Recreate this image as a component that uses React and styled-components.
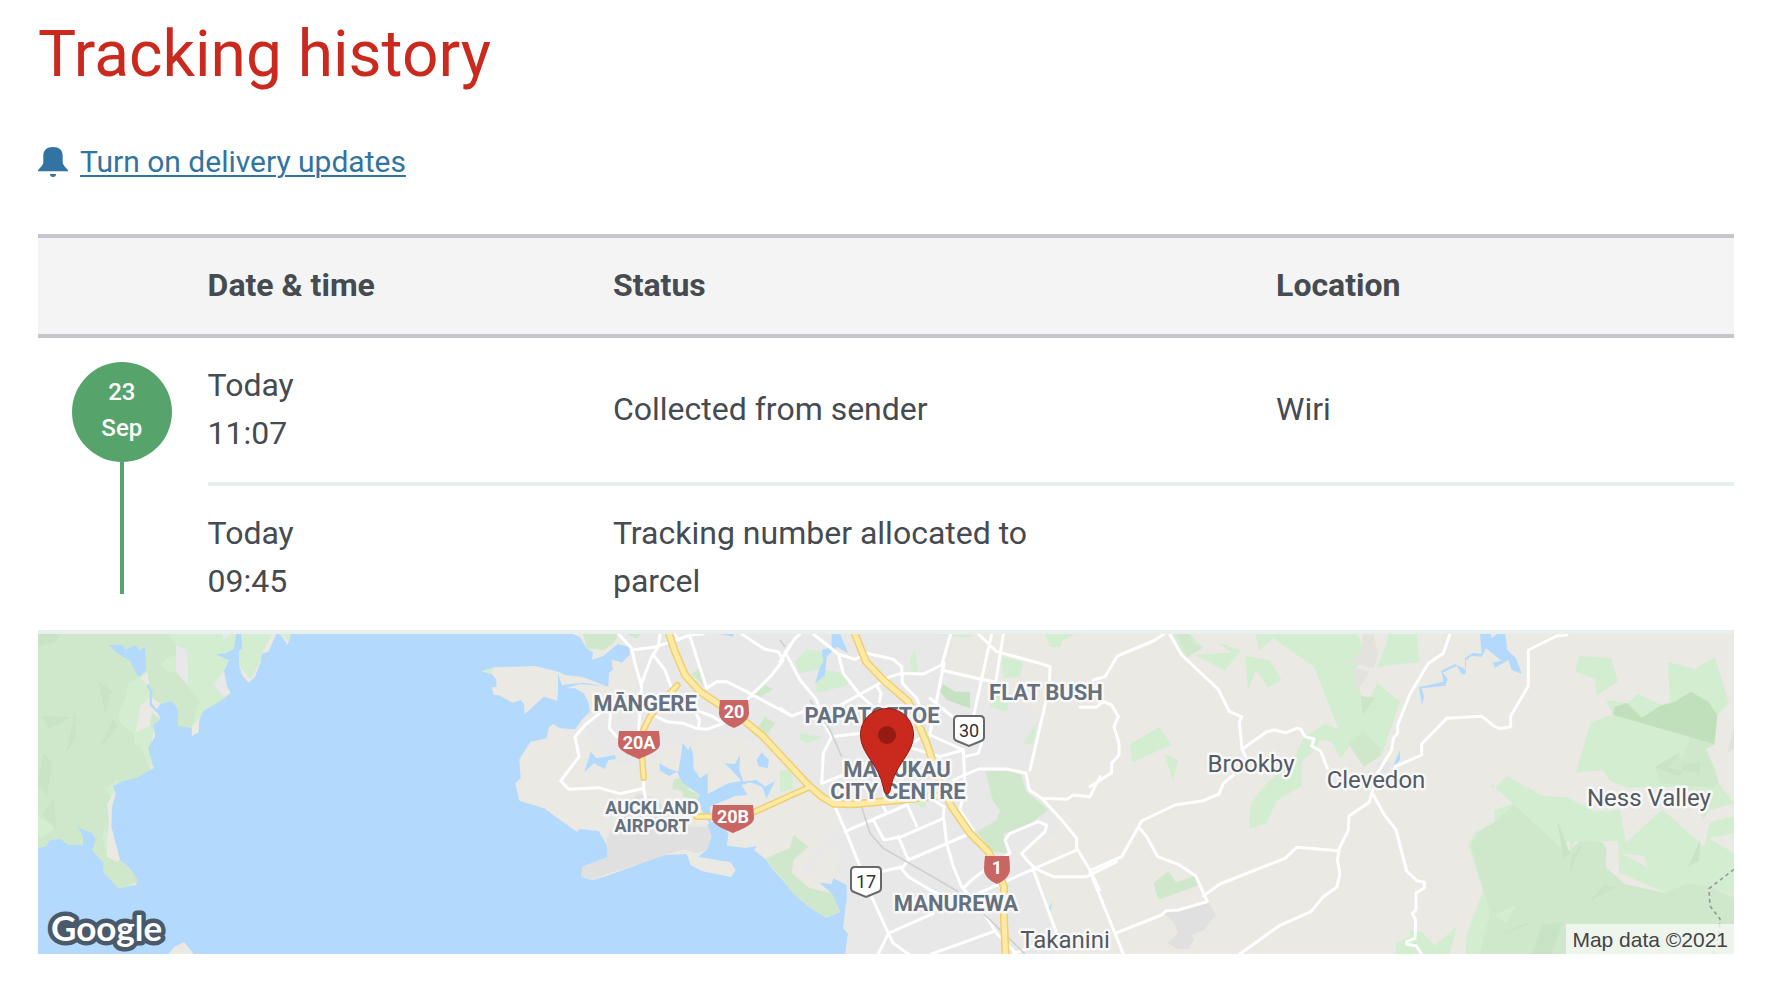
import React from "react";
import styled, { createGlobalStyle } from "styled-components";

const GlobalStyle = createGlobalStyle`
  *, *::before, *::after { box-sizing: border-box; }
  body {
    margin: 0;
    background: #fff;
    color: #454b50;
    font-family: Roboto, "Liberation Sans", sans-serif;
    font-size: 32px;
    line-height: 48px;
  }
`;

const Page = styled.main`
  padding: 15px 58px 54px 38px;
`;

const Title = styled.h1`
  margin: 0;
  color: #ca2a1e;
  font-size: 64px;
  font-weight: 400;
  line-height: 80px;
`;

const UpdatesLink = styled.a`
  display: flex;
  align-items: center;
  gap: 12px;
  width: max-content;
  margin: 43px 0 48px;
  color: #3274a1;
  font-size: 30px;
  text-decoration: none;
  span {
    text-decoration: underline;
    text-decoration-thickness: 2px;
    text-underline-offset: 3px;
  }
`;

const History = styled.table`
  width: 100%;
  table-layout: fixed;
  border-collapse: separate;
  border-spacing: 0;
`;

const Col = styled.col`
  width: ${(p) => p.$width};
`;

const HeadCell = styled.th`
  height: 104px;
  padding: 0 0 2px;
  border: solid #c5c6cb;
  border-width: 4px 0;
  background: #f4f4f5;
  text-align: left;
  font-weight: 700;
`;

const Cell = styled.td`
  padding: 23px ${(p) => p.$endSpace || "0"} 25px 0;
  border-bottom: 4px solid #e8efed;
  vertical-align: middle;
`;

const TimelineCell = styled(Cell)`
  padding: 24px 2px 24px 0;
  vertical-align: top;
`;

const Timeline = styled.div`
  display: flex;
  flex-direction: column;
  align-items: center;
  &::after {
    content: "";
    width: 4px;
    height: 132px;
    background: #56a36c;
  }
`;

const DateBadge = styled.time`
  display: flex;
  flex-direction: column;
  align-items: center;
  justify-content: center;
  width: 100px;
  height: 100px;
  padding-bottom: 4px;
  border-radius: 50%;
  background: #56a36c;
  color: #fff;
  font-size: 24px;
  font-weight: 500;
  line-height: 36px;
`;

const Line = styled.span`
  display: block;
`;

const MapFrame = styled.section`
  position: relative;
  height: 320px;
  overflow: hidden;
  background: #b3d9fd;
`;

const MapDrawing = styled.svg`
  display: block;
  width: 100%;
  height: 100%;
`;

const Attribution = styled.div`
  position: absolute;
  right: 0;
  bottom: 0;
  padding: 1px 6px 0;
  background: rgba(245, 248, 245, 0.8);
  color: #444;
  font-family: "Liberation Sans", Arial, sans-serif;
  font-size: 21px;
  line-height: 29px;
`;

const MapLabel = styled.text`
  fill: ${(p) => (p.$town ? "#555a62" : "#66717f")};
  stroke: #f8f8f8;
  stroke-width: 5px;
  stroke-linejoin: round;
  paint-order: stroke;
  text-anchor: middle;
  font-size: ${(p) => p.$size || 22}px;
  font-weight: ${(p) => (p.$town ? 400 : 700)};
`;

const ShieldText = styled.text`
  fill: ${(p) => (p.$dark ? "#333" : "#fff")};
  text-anchor: middle;
  font-size: 18px;
  font-weight: ${(p) => (p.$dark ? 400 : 700)};
`;

const LogoText = styled.text`
  fill: #fff;
  stroke: #4a5a6b;
  stroke-width: 9px;
  stroke-linejoin: round;
  paint-order: stroke;
  font-family: Lato, sans-serif;
  font-size: 35px;
  font-weight: 700;
`;

const Roads = styled.g`
  fill: none;
  stroke: #fff;
  stroke-width: ${(p) => p.$width || 9};
  stroke-linejoin: round;
  stroke-linecap: round;
`;

const events = [
  { day: "Today", time: "11:07", status: "Collected from sender", place: "Wiri" },
  { day: "Today", time: "09:45", status: "Tracking number allocated to parcel", place: "" },
];

function BellIcon() {
  return (
    <svg width="30" height="30" viewBox="0 0 30 30" aria-hidden="true">
      <path
        fill="#3274a1"
        d="M15 0C9 0 5.300 3 5.300 9V16C4.500 18.500 2.500 20.500 0 23.200V24.300H30V23.200C27.500 20.500 25.500 18.500 24.700 16V9C24.700 3 21 0 15 0ZM12 27H18C18 29 17 30 15 30S12 29 12 27Z"
      />
    </svg>
  );
}

function WestCoast() {
  return (
    <g transform="translate(-24 -42)">
      <path fill="#ebe9e4" d="M634 42H739L715 95L690 103L693 125L674 172L655 188L636 165L628 138V93L638 85ZM750 42H783L773 75ZM415 1002L434 980L462 966L491 1002Z" />
      <path fill="#d3edd0" d="M634 42H726L698 98L690 125L662 178L628 138V93L638 85ZM752 42H783L775 64Z" />
      <path fill="#cfe8cb" d="M24 42H618L612 85L588 100L555 102L597 121L582 152L590 195L583 200L587 215L602 220L582 238L520 273L505 310L506 336L486 348L484 324L444 318V268L426 244L392 251L378 272L392 296L370 316L375 350L354 384L372 443L320 473L262 488L249 498L257 522L246 560L244 620L270 720L296 740L324 780L318 794L266 806L219 755L221 730L186 690L198 660L186 640L148 624L141 595L146 625L159 650V675H115L92 657L61 660L47 680L24 684Z" />
      <path fill="#d3edd0" d="M410 42H618L612 85L588 100L555 102L597 121L582 152L552 195L580 235L520 273L484 324L507 243L445 160L410 152L392 136L410 115L438 105V78ZM328 170L295 190L285 240L265 280L272 310L312 342L314 375H330L360 450L366 430L354 384L370 350L358 300L366 270L355 190ZM24 585L75 624L45 648L24 650ZM262 478L225 508L245 535L256 520L249 498L270 488ZM231 600L216 655L231 700Z" />
      <path fill="#e8e8e8" d="M438 78L472 88L474 197L438 156ZM582 152L590 195L602 220L580 233L552 195ZM577 42H604L580 60Z" />
      <path fill="#ebe9e4" d="M328 172L352 157L357 190L350 194ZM331 258L362 232L392 251L378 272L392 296L366 278L360 318L316 337ZM486 322L508 290L506 336L486 348ZM371 320L375 350L366 364ZM360 430L372 443L362 450ZM252 512L257 522L246 560L244 620L270 720L262 726L231 710V655L237 600L231 555ZM290 798L318 788V795Z" />
      <path fill="#c8e3c5" d="M24 42H91L80 65L24 80ZM205 184L245 212L226 285ZM34 288L123 291L57 328ZM136 276L138 356L108 395ZM250 297L263 320L210 385ZM40 399L66 430L51 525L24 494ZM71 534L80 626L36 584Z" />
      <path fill="#b3d9fd" d="M237 75H278L285 89L318 75L328 92L345 80L348 150L328 170L315 152L300 122L262 100Z" />
      <path fill="none" stroke="#b3d9fd" strokeWidth="7" d="M352 195L364 215L362 252L382 275" />
    </g>
  );
}

function MainLand() {
  return (
    <g transform="translate(1296 -42)">
      <path fill="#ebe9e4" d="M308 42L330 52L350 85L369 97L366 119L400 108L443 72L478 80L479 105L455 128L425 118L428 148L417 160L415 200L335 170L285 165L265 155L195 138L75 142L36 154L66 163L78 178L80 200L65 203L72 225H85L128 248L152 240L162 252L164 283L200 250L222 230L262 242L264 205H315L340 218L355 245L360 275L335 300L315 328L270 325L250 312L237 322L229 355L182 365L148 418L152 475L136 490L148 542L222 565L320 635L330 627L386 633L405 665L418 690L412 712L338 740L333 770L367 780L410 768L580 706L650 702L662 735L695 753L783 771L797 750L782 727L685 710L710 690L725 650L712 615L740 600L775 640L771 677L826 684L862 678L852 690L885 716L910 750L930 772L980 830L1025 866L1070 893L1110 875L1085 820L1130 832L1120 925L1134 940L1126 1002H3792V42Z" />
      <path fill="#e8e8e8" d="M445 42L485 90L500 170L490 215L395 275L340 310L370 380L445 432L520 440L560 415L590 378L650 372L700 345L800 345L860 370L930 410L960 520H1060L1120 600L1000 740L1030 780L1130 832L1120 925L1134 940L1126 1002H1760L1745 930L1690 750L1635 690L1765 640L1755 590L1680 510L1670 450L1710 300L1630 220L1500 170L1440 90L1430 42Z" />
      <path fill="#ebe9e4" d="M1080 670L1110 690L1090 780L1050 790L1010 770ZM1440 90L1500 85L1520 180L1440 180ZM1600 42H1700L1690 90L1610 70Z" />
      <path fill="#e0e0e0" d="M410 655L500 522L545 530L660 620H712L725 650L710 690L680 700L640 688L367 776L333 770L338 740L412 712Z" />
      <path fill="#cfe8cb" d="M340 42H447L430 70L400 90L350 85ZM470 42H513L500 55ZM688 145L710 208L664 162ZM885 290L915 310L890 345L862 325ZM885 195L910 208L865 235L850 225ZM610 480L640 468L662 505L650 508L685 522L688 542L640 530L635 512L606 508ZM885 716L960 684L970 645L1015 680L970 720L965 760L1020 805L1085 820L1110 875L1070 893L1025 866L980 830Z" />
      <path fill="#d3edd0" d="M36 154L70 146L66 163ZM930 455L965 445L970 505L930 520ZM1010 88L1060 95L1065 145L990 160L975 125ZM1065 150L1130 160L1135 195L1040 220L1038 190ZM1335 90L1345 155H1325L1320 120ZM990 340L1055 350L1015 370L990 360ZM1380 45H1510L1500 52ZM1595 110L1660 125L1650 170L1600 175ZM1570 220L1620 235L1610 275L1560 260ZM1700 305L1690 375L1660 370ZM1725 42H1815L1780 60L1770 82L1740 80ZM1320 545L1368 550L1365 565Z" />
      <path fill="#c5e3c2" d="M1420 192L1455 215L1500 215V265L1430 240L1410 215Z" />
      <path fill="#cfe8cb" d="M1545 452L1650 455L1670 515L1735 570L1660 625L1600 640L1610 700L1570 695L1520 635L1580 600L1590 570L1570 545Z" />
      <path fill="#b3d9fd" d="M638 368L655 390L662 378L670 405V445L690 475L713 460V522L775 490L815 483L765 430L795 432L810 405L808 450L820 485L860 480L885 500L915 483L890 535L876 500L840 487L815 495L832 525L795 528L720 560L725 620L700 580L680 540L690 525L640 490L620 455L598 468L570 452L568 430L600 448L625 455L634 400ZM362 395L380 415L435 405L437 417L415 420L404 447L372 430L343 457ZM875 397L897 420L893 445L865 438L860 420ZM264 160L275 195L340 188L415 200L330 192L264 212ZM1085 42H1110L1135 100L1100 80L1070 110L1065 165L1035 192L1050 140L1060 125L1055 90L1085 80ZM1048 788L1085 792L1090 775L1130 795V850L1085 820ZM752 42H790V50ZM1748 845L1740 875L1736 865Z" />
    </g>
  );
}

function CityRoads() {
  return (
    <>
      <Roads transform="translate(1296 -42)">
        <path d="M445 42L485 85L495 130L515 200L505 340M485 90L560 80L660 45L700 42M570 42L565 80L545 110L515 190M550 105L585 150L605 205M615 42L625 60M660 50L710 205L740 185H770L830 215L960 285M815 42L885 88L925 95L940 120L905 165L835 235M960 75L940 110M440 350L418 325L422 275M395 275L345 315L315 350L327 410L272 483L297 508L385 503L450 521L521 505V480M521 505L530 550M560 290L590 305L640 310L680 325L710 328L760 310M685 325L688 300L680 285M690 275L730 290L760 310" />
      </Roads>
      <Roads transform="translate(2226 -42)">
        <path d="M0 125L45 55L60 42M15 95L60 180L110 240L130 310L155 350L130 400L125 490M0 265L35 288L70 275M100 42L175 102L190 160L240 225L290 270M175 102L225 118L260 100L340 118L365 140L367 190L410 235L420 260M155 350L240 340M155 270L290 195L330 170L365 160L430 162L485 135L512 42M290 195L303 220L298 245M485 150L590 175L640 185M492 130L450 340M635 42L580 290M670 42L645 200M595 42L650 95L780 130L810 140L808 200L750 450M450 345L550 390L480 410L380 380L420 355M550 390L555 500L540 570L580 630M555 410L595 400L605 370M450 235L530 300M520 480L595 447H680L738 460L748 510L785 535L860 538L880 525L930 530L960 470M785 535L845 600L890 655V685L930 750L958 810M890 690L765 745L560 835M765 745L820 770H920L1010 725M760 750L830 940M725 700L740 720L765 745M725 700L795 635L800 615L775 605L690 640L675 660L690 700L620 745L575 780L555 800M125 490L190 465M165 560L200 640L240 740M195 635L310 585L380 555M280 600L312 660L365 650L490 595L492 560L460 540V510M305 550L318 575M380 550L410 618M355 650L385 720L370 740L300 755M385 720L560 645M492 600L500 670L520 740L545 800L610 875L650 940L710 1002M360 740L385 770L460 815L540 850M275 830L325 940L340 970L385 1002M325 940L460 880M325 940L295 1002M455 1002L640 935M700 1002L830 950" />
      </Roads>
      <g transform="translate(2226 -42)" fill="none" stroke="#d0d0d0" strokeWidth="5">
        <path d="M90 240L150 330L185 410M245 560L270 640L310 685L440 760L535 815M610 880L735 1002M0 60L15 80" />
      </g>
      {[
        { color: "#f0cf73", width: 24 },
        { color: "#fdeaa5", width: 15 },
      ].map((layer) => (
        <Roads key={layer.color} $width={layer.width} style={{ stroke: layer.color }} transform="translate(1296 -42)">
          <path d="M595 35L615 95L645 165L690 215L750 255L820 300L880 350L1010 490L1055 530L1090 551L1150 553L1290 540L1400 528M1152 35L1188 125L1240 180L1315 245L1340 300L1370 370L1410 490L1445 560L1500 640L1555 695L1585 755L1602 800V900L1607 1010" />
          <path strokeWidth={layer.width - 4} d="M622 196L575 245L540 290L520 330L515 400L521 473M680 590H730L855 575L960 527L1015 503" />
        </Roads>
      ))}
    </>
  );
}

function CountrySide() {
  return (
    <>
      <g transform="translate(3156 -42)">
        <path fill="#d3edd0" d="M497 42H805L820 90L800 150L820 270L862 190L930 245L875 405L820 440L778 378L752 418L725 365L690 360L668 395L635 425V497L560 542L530 610L478 627L480 555L530 490L610 420L640 355L703 312L745 327L672 140L550 55L508 92ZM895 42H980L988 125L862 140L890 70ZM385 68L452 90L404 152L315 104L425 98ZM466 108L538 120L575 180L535 203L498 150L474 210ZM120 372L208 322L244 375L126 427ZM224 400L264 422L248 483ZM918 970L990 935V1002H918ZM250 42H300L338 83L292 112L270 85Z" />
        <path fill="#cfe8cb" d="M190 790L235 754L258 787L318 767L322 797L205 839ZM778 370L820 333L870 385L868 410L820 440ZM262 42H300L312 70L338 83L292 112Z" />
        <path fill="#e4e2de" d="M818 42H850L864 100L852 145L790 130L782 125L815 90ZM790 140L838 155L800 215Z" />
        <path fill="#cae5c7" d="M812 227L855 235L818 285Z" />
        <path fill="#e0e0e0" d="M220 880L265 870L355 848L377 884L342 930L305 945L313 958L295 987H262L233 968L265 940L250 905Z" />
        <path fill="#e5e5e8" d="M862 425L905 425L895 455L862 465Z" />
        <path fill="#b3d9fd" d="M930 390V420L908 442Z" />
      </g>
      <g transform="translate(4116 -42)">
        <path fill="#d3edd0" d="M0 42H18L26 125L0 128ZM508 108L604 114L624 184L560 227L555 178L495 155ZM774 126L855 147L914 110L957 250L922 285L915 372L888 387L918 450L926 490L972 550L900 570L880 597L830 500L655 503L600 482L578 450L498 458L542 306L608 285L588 240L652 250L683 222L755 255L780 245ZM240 497L252 490V506ZM256 503L290 469L400 528L470 532L555 574L630 570L648 668L757 568L882 680L900 607L972 588V640L895 655L972 700V830L955 820L900 800L765 818L627 758L624 668L592 664L470 665L440 1002H167L170 940L220 815L175 677L192 640L256 605L252 570L310 552ZM0 930L35 935L75 977L142 916L118 1002H0Z" />
        <path fill="#cfe8cb" d="M312 555L256 605L210 633L182 675L222 815L240 880L210 1002H972V832L900 800L835 790L765 818L645 792L588 742L590 685L575 665L510 662L470 698Z" />
        <path fill="#cfe8cb" d="M842 350L915 372L888 387L926 490L905 503L750 490L735 440L808 400L815 420Z" />
        <path fill="#bfe0ba" d="M612 262L650 248L695 293L752 257L795 245L842 215L895 245L922 285L913 372L610 285Z" />
        <path fill="#c8e3c5" d="M808 398L775 445L870 460V428L820 432L810 472L735 440ZM442 603L480 700L460 715ZM520 668L495 720L477 770L487 705ZM620 800L540 843L582 795ZM870 660L868 720L835 740ZM370 908L310 930L255 950L345 910ZM460 905L425 1002H365L395 915Z" />
        <path fill="#d3edd0" d="M480 628L502 632L480 700ZM315 858L290 910L254 884ZM895 655L935 680L912 700Z" />
        <path fill="#ebe9e4" d="M635 700L705 708L712 742ZM592 664H624L627 758L765 818L645 792L588 742Z" />
        <path fill="#e2e0dc" d="M972 320V385L953 397Z" />
        <path fill="#b3d9fd" d="M210 42H243L244 55L262 42H286L292 90L318 115L335 161L305 150L295 120L255 143L248 128L275 122L228 85L215 110L185 108L168 120L167 163L155 162L140 137L98 158L113 178L105 197L35 205L42 230L36 256L27 202L100 185L94 152L135 132L165 148V115L190 98L215 102Z" />
        <path fill="none" stroke="#97979d" strokeWidth="5" strokeDasharray="11 10" d="M972 748L897 806L900 858L930 897L925 950L910 1000" />
      </g>
      <Roads transform="translate(3156 -42)">
        <path d="M235 35L275 105L385 208L418 275L455 290L448 305L456 388L530 335L553 330L588 338L620 325L632 327L645 350L672 357L665 378L692 393L712 445M222 42L190 63L82 108L45 170L10 180M456 388L470 415M430 465L400 490L387 522L340 542L255 555L155 603L95 710L0 752M147 622L170 650L203 710L265 733L317 767L352 845L265 870L228 872L215 885L75 940M0 755L100 1002M340 828L390 792L585 715L620 682L745 692M0 500L65 458V430L87 405V370L72 320L85 290L65 255L40 245L18 262H-30M450 1002L568 917L663 875L700 830L740 802L750 762L742 720L748 685L775 630L777 588L838 547L848 510L862 460L905 390L910 355L923 340V315L960 222L1015 130L1060 100L1080 42M850 525L882 583L918 630L950 753L980 782L1003 787V803L978 820V870L967 880L977 900L975 955L950 965V973L978 977L995 1002M915 440L995 405V372L1070 295L1175 289L1212 318L1230 326L1262 320V288L1315 198V90L1400 48L1430 45" />
      </Roads>
    </>
  );
}

function Highway({ x, y, name, wide }) {
  const half = wide === "lg" ? 21 : wide === "sm" ? 13 : 15;
  return (
    <g transform={`translate(${x} ${y})`}>
      <path fill="#c96664" d={`M${-half + 1} 0H${half - 1}Q${half} 8 ${half} 13C${half} 20 7 25 0 28C-7 25 ${-half} 20 ${-half} 13Q${-half} 8 ${-half + 1} 0Z`} />
      <ShieldText y="18">{name}</ShieldText>
    </g>
  );
}

function LocalRoute({ x, y, name }) {
  return (
    <g transform={`translate(${x} ${y})`}>
      <path fill="#fff" stroke="#66696c" strokeWidth="2" d="M-11 1H11Q15 1 15 5V22Q15 25 12 26L0 31L-12 26Q-15 25 -15 22V5Q-15 1 -11 1Z" />
      <ShieldText $dark y="22">{name}</ShieldText>
    </g>
  );
}

function DeliveryMap() {
  return (
    <MapFrame aria-label="Parcel location map">
      <MapDrawing viewBox="0 0 1696 320" preserveAspectRatio="xMidYMid slice">
        <g transform="scale(0.333333)">
          <WestCoast />
          <MainLand />
          <CountrySide />
          <CityRoads />
        </g>
        <MapLabel x="607" y="77">MĀNGERE</MapLabel>
        <MapLabel x="614" y="180" $size={18}>AUCKLAND</MapLabel>
        <MapLabel x="614" y="198" $size={18}>AIRPORT</MapLabel>
        <MapLabel x="834" y="89">PAPATOETOE</MapLabel>
        <MapLabel x="859" y="143">MANUKAU</MapLabel>
        <MapLabel x="860" y="165">CITY CENTRE</MapLabel>
        <MapLabel x="1008" y="66">FLAT BUSH</MapLabel>
        <MapLabel x="918" y="277">MANUREWA</MapLabel>
        <MapLabel $town $size={24} x="1027" y="314">Takanini</MapLabel>
        <MapLabel $town $size={24} x="1213" y="138">Brookby</MapLabel>
        <MapLabel $town $size={24} x="1338" y="154">Clevedon</MapLabel>
        <MapLabel $town $size={24} x="1611" y="172">Ness Valley</MapLabel>
        <Highway x={696} y={66} name="20" />
        <Highway x={601} y={97} name="20A" wide="lg" />
        <Highway x={695} y={171} name="20B" wide="lg" />
        <Highway x={959} y={222} name="1" wide="sm" />
        <LocalRoute x={931} y={81} name="30" />
        <LocalRoute x={828} y={232} name="17" />
        <path fill="#ca2a1e" stroke="#8e1a12" strokeWidth="1" d="M849 74.500C834 74.500 822.500 86 822.500 101C822.500 120 841 130 845.500 154Q846 160 849 160T852.500 154C857 130 875.500 120 875.500 101C875.500 86 864 74.500 849 74.500Z" />
        <circle cx="849" cy="101" r="9" fill="#961b12" />
        <LogoText x="13" y="307">Google</LogoText>
      </MapDrawing>
      <Attribution>Map data ©2021</Attribution>
    </MapFrame>
  );
}

export default function App() {
  return (
    <>
      <GlobalStyle />
      <Page>
        <Title>Tracking history</Title>
        <UpdatesLink href="#updates">
          <BellIcon />
          <span>Turn on delivery updates</span>
        </UpdatesLink>
        <History>
          <colgroup>
            <Col $width="10%" />
            <Col $width="23.9%" />
            <Col $width="39.1%" />
            <Col $width="27%" />
          </colgroup>
          <thead>
            <tr>
              <HeadCell aria-label="Day" />
              <HeadCell scope="col">Date &amp; time</HeadCell>
              <HeadCell scope="col">Status</HeadCell>
              <HeadCell scope="col">Location</HeadCell>
            </tr>
          </thead>
          <tbody>
            {events.map((event, index) => (
              <tr key={event.time}>
                {index === 0 && (
                  <TimelineCell rowSpan={events.length}>
                    <Timeline>
                      <DateBadge dateTime="2021-09-23">
                        <Line>23</Line>
                        <Line>Sep</Line>
                      </DateBadge>
                    </Timeline>
                  </TimelineCell>
                )}
                <Cell>
                  <Line>{event.day}</Line>
                  <Line>{event.time}</Line>
                </Cell>
                <Cell $endSpace="176px">{event.status}</Cell>
                <Cell>{event.place}</Cell>
              </tr>
            ))}
          </tbody>
        </History>
        <DeliveryMap />
      </Page>
    </>
  );
}
